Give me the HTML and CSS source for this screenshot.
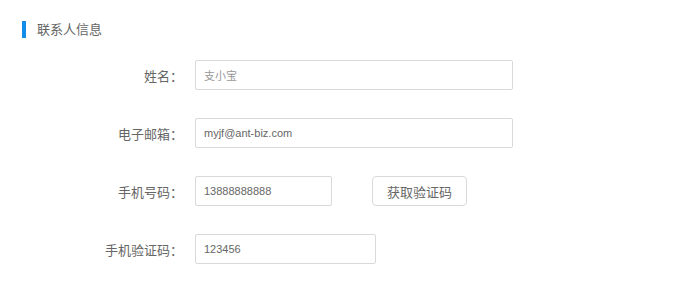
FILE: index.html
```html
<!DOCTYPE html>
<html lang="zh-CN">
<head>
  <meta charset="UTF-8">
  <title>联系人信息</title>
  <link rel="stylesheet" href="styles.css">
</head>
<body>
  <div class="section">
    <h2 class="section-title">联系人信息</h2>

    <div class="form">
      <div class="form-row">
        <label class="form-label">姓名：</label>
        <input class="input input-wide placeholder" type="text" value="支小宝">
      </div>

      <div class="form-row">
        <label class="form-label">电子邮箱：</label>
        <input class="input input-wide" type="text" value="myjf@ant-biz.com">
      </div>

      <div class="form-row">
        <label class="form-label">手机号码：</label>
        <input class="input input-short" type="text" value="13888888888">
        <button class="btn" type="button">获取验证码</button>
      </div>

      <div class="form-row">
        <label class="form-label">手机验证码：</label>
        <input class="input input-mid" type="text" value="123456">
      </div>
    </div>
  </div>
</body>
</html>
```

FILE: styles.css
```css
body {
  margin: 0;
  background: #fff;
  font-family: "Liberation Sans", "Noto Sans CJK SC", sans-serif;
  color: #666;
}

.section {
  padding: 21px 0 0 22px;
}

.section-title {
  margin: 0;
  height: 17px;
  line-height: 17px;
  padding-left: 11px;
  border-left: 4px solid #108ee9;
  font-size: 13px;
  font-weight: normal;
  color: #666;
}

.form {
  display: flex;
  flex-direction: column;
  gap: 28px;
  margin-top: 22px;
}

.form-row {
  display: flex;
  align-items: center;
}

.form-label {
  width: 161px;
  text-align: right;
  font-size: 13px;
  color: #666;
  margin-right: 12px;
}

.input {
  box-sizing: border-box;
  height: 30px;
  padding: 0 8px;
  border: 1px solid #d9d9d9;
  border-radius: 2px;
  font-family: inherit;
  font-size: 11px;
  color: #666;
  outline: none;
}

.placeholder {
  color: #999;
}

.input-wide {
  width: 318px;
}

.input-short {
  width: 137px;
}

.input-mid {
  width: 181px;
}

.btn {
  box-sizing: border-box;
  margin-left: 40px;
  width: 95px;
  height: 30px;
  background: #fff;
  border: 1px solid #d9d9d9;
  border-radius: 4px;
  font-family: inherit;
  font-size: 13px;
  color: #666;
}
```
